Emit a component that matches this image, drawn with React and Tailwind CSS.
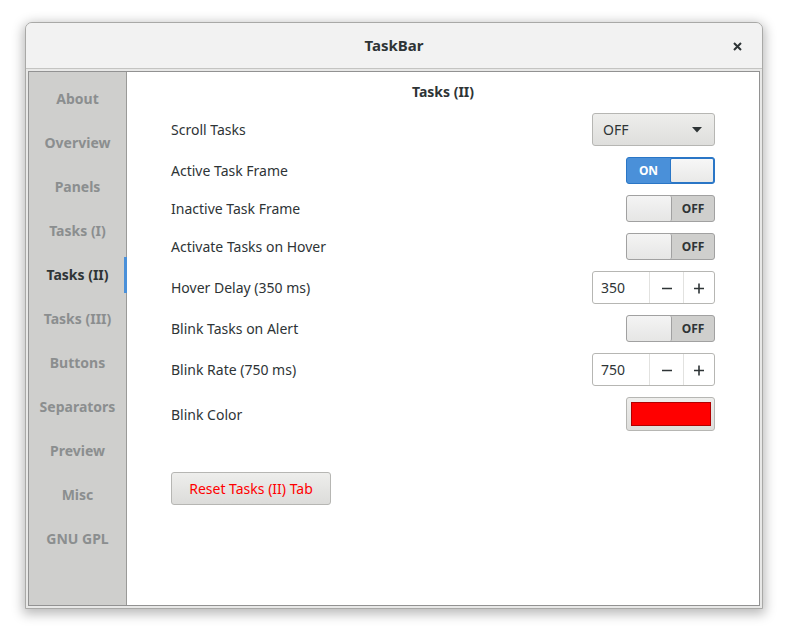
import React from "react";

const tabs = ["About","Overview","Panels","Tasks (I)","Tasks (II)","Tasks (III)","Buttons","Separators","Preview","Misc","GNU GPL"];

function Switch({ on }) {
  if (on) {
    return (
      <div className="flex h-[27px] w-[89px] overflow-hidden rounded-[3px] border border-[#2a76c6] bg-[#4a90d9]">
        <div className="flex w-[43px] items-center justify-center text-[12px] font-bold text-white">ON</div>
        <div className="flex-1 rounded-[2px] border border-[#2a76c6] bg-gradient-to-b from-[#f7f7f7] to-[#e9e9e8]" />
      </div>
    );
  }
  return (
    <div className="flex h-[27px] w-[89px] overflow-hidden rounded-[3px] border border-[#a1a1a1] bg-[#cfcfcd]">
      <div className="w-[45px] rounded-[2px] border-r border-[#a1a1a1] bg-gradient-to-b from-[#f4f4f4] to-[#e6e6e5]" />
      <div className="flex flex-1 items-center justify-center text-[12px] font-bold text-[#2e3436]">OFF</div>
    </div>
  );
}

function Spin({ value }) {
  return (
    <div className="flex h-[33px] w-[123px] overflow-hidden rounded-[3px] border border-[#b6b6b3] bg-white text-[14px] text-[#2e3436]">
      <div className="flex w-[56px] items-center pl-[8px]">{value}</div>
      <div className="flex w-[34px] items-center justify-center border-l border-[#e2e2e0]">
        <svg width="12" height="12" viewBox="0 0 12 12"><path d="M1 6.5h10" stroke="#2e3436" strokeWidth="1.6" /></svg>
      </div>
      <div className="flex flex-1 items-center justify-center border-l border-[#e2e2e0]">
        <svg width="12" height="12" viewBox="0 0 12 12"><path d="M1 6.5h10M6 1.5v10" stroke="#2e3436" strokeWidth="1.6" /></svg>
      </div>
    </div>
  );
}

function Row({ label, children }) {
  return (
    <div className="flex items-center justify-between">
      <span className="text-[14px] text-[#2e3436]">{label}</span>
      {children}
    </div>
  );
}

export default function App() {
  return (
    <div className="h-[637px] w-[788px] bg-white pl-[25px] pt-[22px] font-['Noto_Sans',sans-serif]">
      <div className="flex h-[587px] w-[738px] flex-col overflow-hidden rounded-t-[7px] border border-[#a9a9a7] bg-[#e8e8e7] shadow-[0_3px_12px_2px_rgba(0,0,0,0.28)]">
        <div className="relative flex h-[46px] shrink-0 items-center justify-center border-b border-[#c4c4c2] bg-[#f2f2f2]">
          <span className="text-[15px] font-bold text-[#2e3436]">TaskBar</span>
          <svg className="absolute right-[20px] top-[19px]" width="9" height="9" viewBox="0 0 9 9">
            <path d="M1 1l7 7M8 1l-7 7" stroke="#2e3436" strokeWidth="2" />
          </svg>
        </div>
        <div className="flex flex-1 p-[2px] pb-[2px]">
          <div className="flex flex-1 border border-[#929292] bg-white">
            <div className="flex w-[98px] shrink-0 flex-col border-r border-[#9a9a98] bg-[#cfcfcd] pt-[4px]">
              {tabs.map((t) => {
                const sel = t === "Tasks (II)";
                return (
                  <div key={t} className="relative flex h-[44px] items-center justify-center">
                    <span className={sel ? "text-[14px] font-bold text-[#2e3436]" : "text-[14px] font-bold text-[#8b8e8f]"}>{t}</span>
                    {sel && <div className="absolute right-[-1px] top-[5px] h-[36px] w-[3px] bg-[#4a90d9]" />}
                  </div>
                );
              })}
            </div>
            <div className="flex flex-1 flex-col px-[44px] pt-[10px]">
              <div className="text-center text-[14px] font-bold leading-[20px] text-[#2e3436]">Tasks (II)</div>
              <div className="mt-[11px] flex flex-col gap-[11px]">
                <Row label="Scroll Tasks">
                  <div className="flex h-[33px] w-[123px] items-center justify-between rounded-[3px] border border-[#b6b6b3] bg-gradient-to-b from-[#eeeeec] to-[#dededc] pl-[10px] pr-[12px] text-[14px] text-[#2e3436]">
                    <span>OFF</span>
                    <svg width="10" height="6" viewBox="0 0 10 6"><path d="M0 0h10L5 5.5z" fill="#2e3436" /></svg>
                  </div>
                </Row>
                <Row label="Active Task Frame"><Switch on /></Row>
                <Row label="Inactive Task Frame"><Switch /></Row>
                <Row label="Activate Tasks on Hover"><Switch /></Row>
                <Row label="Hover Delay (350 ms)"><Spin value="350" /></Row>
                <Row label="Blink Tasks on Alert"><Switch /></Row>
                <Row label="Blink Rate (750 ms)"><Spin value="750" /></Row>
                <Row label="Blink Color">
                  <div className="flex h-[34px] w-[89px] items-center justify-center rounded-[3px] border border-[#b6b6b3] bg-gradient-to-b from-[#eeeeec] to-[#dededc]">
                    <div className="h-[24px] w-[80px] border border-[#b00000] bg-[#ff0000]" />
                  </div>
                </Row>
              </div>
              <div className="mt-[41px]">
                <button className="flex h-[33px] w-[160px] items-center justify-center rounded-[3px] border border-[#b6b6b3] bg-gradient-to-b from-[#eeeeec] to-[#dcdcda] text-[14px] text-[#ff0000]">
                  Reset Tasks (II) Tab
                </button>
              </div>
            </div>
          </div>
        </div>
      </div>
    </div>
  );
}
